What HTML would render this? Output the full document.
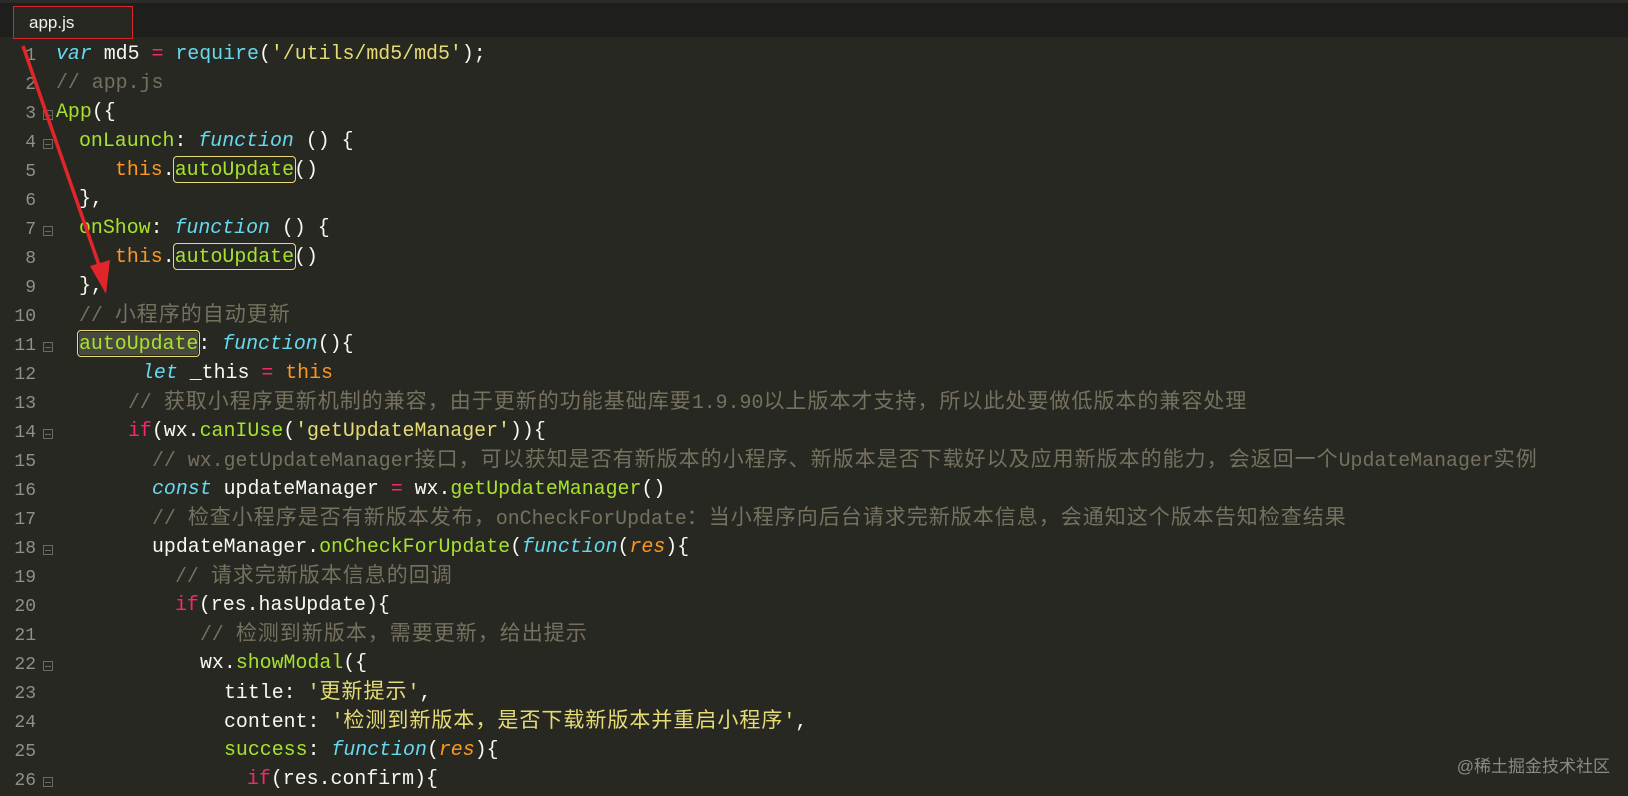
<!DOCTYPE html>
<html><head><meta charset="utf-8"><style>
*{margin:0;padding:0;box-sizing:border-box}
html,body{width:1628px;height:782px;overflow:hidden;background:#272822}
.top{position:absolute;left:0;top:0;width:1628px;height:37px;background:#1e1f1c;border-top:3px solid #2b2c27}
.tab{position:absolute;left:13px;top:6px;width:120px;height:33px;border:1px solid #d8262a;color:#f0f0f0;font:17px "Liberation Sans",sans-serif;padding:6px 0 0 15px;background:#272822}
.ln{position:absolute;left:0;width:36px;text-align:right;color:#8f908a;font:18px "Liberation Mono",monospace;height:29px;line-height:29px}
.fd{position:absolute;left:43px;width:10px;height:10px;border:1px solid #6a6a63}
.fd:after{content:"";position:absolute;left:1px;top:3.5px;width:6px;height:1px;background:#6a6a63}
.cl{position:absolute;left:56px;height:29px;line-height:29px;font:19.9px "Liberation Mono",monospace;color:#f8f8f2;white-space:pre}
.cl span{line-height:1}
.k{color:#f92672}.f{color:#66d9ef;font-style:italic}.g{color:#a6e22e}.s{color:#e6db74}.c{color:#75715e}.o{color:#fd971f}.p{color:#fd971f;font-style:italic}
.z{font-family:"Noto Sans CJK SC",sans-serif;font-size:21px;letter-spacing:1px}
.b{outline:1px solid #e6db74;outline-offset:1px;border-radius:2px}
.bg{background:#49483e}
.wm{position:absolute;right:18px;top:752px;color:#8a8a85;font:17px "Liberation Sans","Noto Sans CJK SC",sans-serif}
</style></head><body>
<div class="top"></div>
<div class="tab">app.js</div>
<div class="ln" style="top:42px">1</div><div class="cl" style="top:42px"><span class="f">var</span> md5 <span class="k">=</span> <span class="f" style="font-style:normal">require</span>(<span class="s">'/utils/md5/md5'</span>);</div>
<div class="ln" style="top:71px">2</div><div class="cl" style="top:71px"><span class="c">// app.js</span></div>
<div class="ln" style="top:100px">3</div><div class="fd" style="top:110px"></div><div class="cl" style="top:100px"><span class="g">App</span>({</div>
<div class="ln" style="top:129px">4</div><div class="fd" style="top:139px"></div><div class="cl" style="top:129px;padding-left:23px"><span class="g">onLaunch</span>: <span class="f">function</span> () {</div>
<div class="ln" style="top:158px">5</div><div class="cl" style="top:158px;padding-left:59px"><span class="o">this</span>.<span class="g b">autoUpdate</span>()</div>
<div class="ln" style="top:187px">6</div><div class="cl" style="top:187px;padding-left:23px">},</div>
<div class="ln" style="top:216px">7</div><div class="fd" style="top:226px"></div><div class="cl" style="top:216px;padding-left:23px"><span class="g">onShow</span>: <span class="f">function</span> () {</div>
<div class="ln" style="top:245px">8</div><div class="cl" style="top:245px;padding-left:59px"><span class="o">this</span>.<span class="g b">autoUpdate</span>()</div>
<div class="ln" style="top:274px">9</div><div class="cl" style="top:274px;padding-left:23px">},</div>
<div class="ln" style="top:303px">10</div><div class="cl" style="top:303px;padding-left:23px"><span class="c">// <span class="z">小程序的自动更新</span></span></div>
<div class="ln" style="top:332px">11</div><div class="fd" style="top:342px"></div><div class="cl" style="top:332px;padding-left:23px"><span class="g b bg">autoUpdate</span>: <span class="f">function</span>(){</div>
<div class="ln" style="top:361px">12</div><div class="cl" style="top:361px;padding-left:86px"><span class="f">let</span> _this <span class="k">=</span> <span class="o">this</span></div>
<div class="ln" style="top:390px">13</div><div class="cl" style="top:390px;padding-left:72px"><span class="c">// <span class="z">获取小程序更新机制的兼容，由于更新的功能基础库要</span>1.9.90<span class="z">以上版本才支持，所以此处要做低版本的兼容处理</span></span></div>
<div class="ln" style="top:419px">14</div><div class="fd" style="top:429px"></div><div class="cl" style="top:419px;padding-left:72px"><span class="k">if</span>(wx.<span class="g">canIUse</span>(<span class="s">'getUpdateManager'</span>)){</div>
<div class="ln" style="top:448px">15</div><div class="cl" style="top:448px;padding-left:96px"><span class="c">// wx.getUpdateManager<span class="z">接口，可以获知是否有新版本的小程序、新版本是否下载好以及应用新版本的能力，会返回一个</span>UpdateManager<span class="z">实例</span></span></div>
<div class="ln" style="top:477px">16</div><div class="cl" style="top:477px;padding-left:96px"><span class="f">const</span> updateManager <span class="k">=</span> wx.<span class="g">getUpdateManager</span>()</div>
<div class="ln" style="top:506px">17</div><div class="cl" style="top:506px;padding-left:96px"><span class="c">// <span class="z">检查小程序是否有新版本发布，</span>onCheckForUpdate<span class="z">：当小程序向后台请求完新版本信息，会通知这个版本告知检查结果</span></span></div>
<div class="ln" style="top:535px">18</div><div class="fd" style="top:545px"></div><div class="cl" style="top:535px;padding-left:96px">updateManager.<span class="g">onCheckForUpdate</span>(<span class="f">function</span>(<span class="p">res</span>){</div>
<div class="ln" style="top:564px">19</div><div class="cl" style="top:564px;padding-left:119px"><span class="c">// <span class="z">请求完新版本信息的回调</span></span></div>
<div class="ln" style="top:593px">20</div><div class="cl" style="top:593px;padding-left:119px"><span class="k">if</span>(res.hasUpdate){</div>
<div class="ln" style="top:622px">21</div><div class="cl" style="top:622px;padding-left:144px"><span class="c">// <span class="z">检测到新版本，需要更新，给出提示</span></span></div>
<div class="ln" style="top:651px">22</div><div class="fd" style="top:661px"></div><div class="cl" style="top:651px;padding-left:144px">wx.<span class="g">showModal</span>({</div>
<div class="ln" style="top:680px">23</div><div class="cl" style="top:680px;padding-left:168px">title: <span class="s">'<span class="z">更新提示</span>'</span>,</div>
<div class="ln" style="top:709px">24</div><div class="cl" style="top:709px;padding-left:168px">content: <span class="s">'<span class="z">检测到新版本，是否下载新版本并重启小程序</span>'</span>,</div>
<div class="ln" style="top:738px">25</div><div class="cl" style="top:738px;padding-left:168px"><span class="g">success</span>: <span class="f">function</span>(<span class="p">res</span>){</div>
<div class="ln" style="top:767px">26</div><div class="fd" style="top:777px"></div><div class="cl" style="top:767px;padding-left:191px"><span class="k">if</span>(res.confirm){</div>
<div class="wm">@稀土掘金技术社区</div>
<svg style="position:absolute;left:0;top:0" width="1628" height="782">
<line x1="23" y1="46" x2="100" y2="268" stroke="#e0262b" stroke-width="3.5"/>
<polygon points="106,294 90,266 110,260" fill="#e0262b"/>
</svg>
</body></html>
